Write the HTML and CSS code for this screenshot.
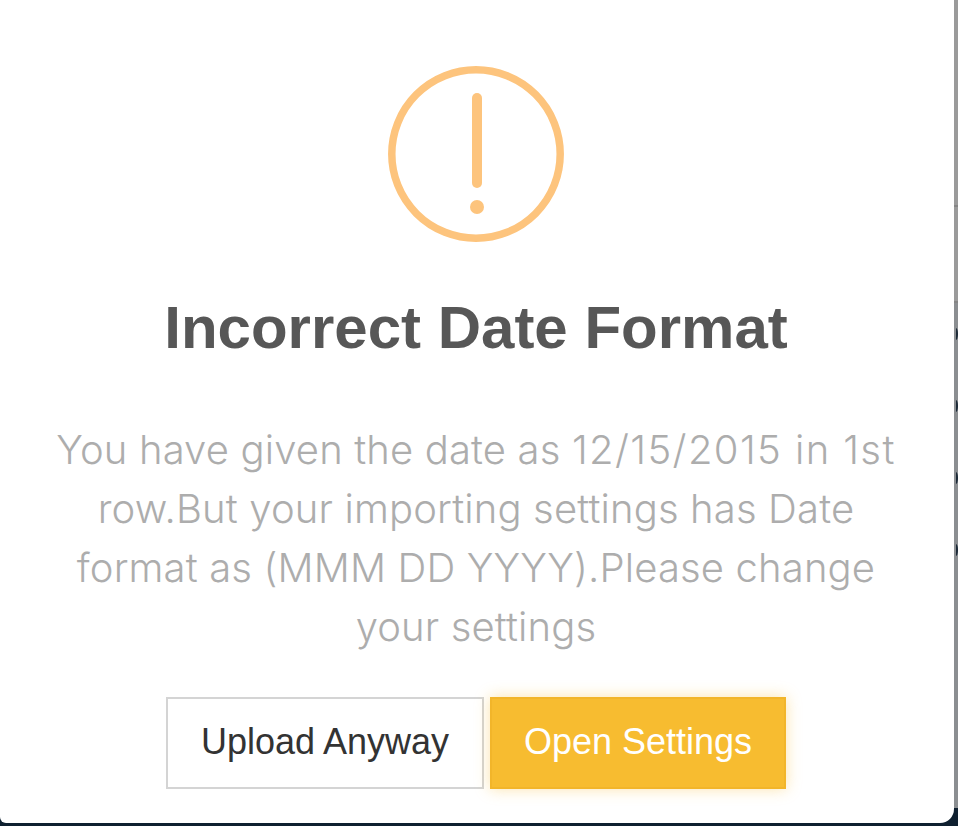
FILE: index.html
```html
<!DOCTYPE html>
<html lang="en">
<head>
    <meta charset="UTF-8">
    <meta name="viewport" content="width=device-width, initial-scale=1.0">
    <title>Incorrect Date Format</title>
    <link rel="stylesheet" href="styles.css">
</head>
<body>
    <div class="page">
        <div class="modal">
            <svg class="alert-icon" width="176" height="176" viewBox="0 0 176 176">
                <circle cx="88" cy="88" r="84.2" fill="none" stroke="#fdc47d" stroke-width="7.5"/>
                <line x1="89" y1="32" x2="89" y2="117" stroke="#fdc47d" stroke-width="10" stroke-linecap="round"/>
                <circle cx="89" cy="141" r="7" fill="#fdc47d"/>
            </svg>
            <h2 class="title">Incorrect Date Format</h2>
            <p class="message">You have given the date as <span class="date-value">12/15/2015 in 1st</span> row.But your importing settings has Date format as (MMM DD YYYY).Please change your settings</p>
            <div class="actions">
                <button type="button" class="btn btn-default">Upload Anyway</button>
                <button type="button" class="btn btn-primary">Open Settings</button>
            </div>
        </div>
        <div class="backdrop">
            <div class="backdrop-top"></div>
            <div class="backdrop-rows">
                <span class="row-mark"></span>
                <span class="row-mark"></span>
                <span class="row-mark"></span>
                <span class="row-mark"></span>
            </div>
        </div>
    </div>
</body>
</html>
```

FILE: styles.css
```css
html, body {
    margin: 0;
    height: 100%;
    overflow: hidden;
}
body {
    background-color: #0f2030;
    font-family: "Liberation Sans", Arial, sans-serif;
}
.page {
    display: flex;
    align-items: flex-start;
    height: 826px;
}
.modal {
    width: 954px;
    height: 823px;
    flex-shrink: 0;
    box-sizing: border-box;
    padding-top: 66px;
    padding-right: 2px;
    background-color: #fff;
    border-radius: 0 0 14px 6px;
    display: flex;
    flex-direction: column;
    align-items: center;
}
.alert-icon {
    display: block;
    flex-shrink: 0;
}
.title {
    margin: 50px 0 0;
    font-size: 60px;
    line-height: 72px;
    font-weight: bold;
    color: #575757;
}
.message {
    width: 878px;
    margin: 56px 0 0;
    font-family: "Inter", "Liberation Sans", sans-serif;
    font-size: 40px;
    letter-spacing: 0.15px;
    line-height: 59px;
    font-weight: 300;
    text-align: center;
    color: #adadad;
}
.date-value {
    letter-spacing: 1.4px;
}
.actions {
    display: flex;
    gap: 6px;
    margin-top: 41px;
}
.btn {
    height: 92px;
    padding: 0 0 2px;
    font-family: inherit;
    font-size: 36px;
    cursor: pointer;
}
.btn-default {
    width: 318px;
    background-color: #fff;
    color: #333;
    border: 2px solid #d4d4d4;
}
.btn-primary {
    width: 296px;
    background-color: #f7bc30;
    color: #fff;
    border: 2px solid #f2b52a;
    box-shadow: 0 0 14px rgba(247, 188, 48, 0.4);
}
.backdrop {
    flex: 1;
    height: 808px;
    display: flex;
    flex-direction: column;
}
.backdrop-top {
    height: 303px;
    background-color: #9a9a9a;
    background-image: linear-gradient(#858585, #858585);
    background-size: 100% 2px;
    background-position: 0 205px;
    background-repeat: no-repeat;
    border-bottom: 2px solid #858585;
    box-sizing: border-box;
}
.backdrop-rows {
    flex: 1;
    background-color: #8b8e91;
    display: flex;
    flex-direction: column;
    gap: 60px;
    padding-top: 25px;
}
.row-mark {
    display: block;
    width: 2px;
    height: 12px;
    border-right: 2px solid #1c2a38;
    border-radius: 0 50% 50% 0;
}
```
